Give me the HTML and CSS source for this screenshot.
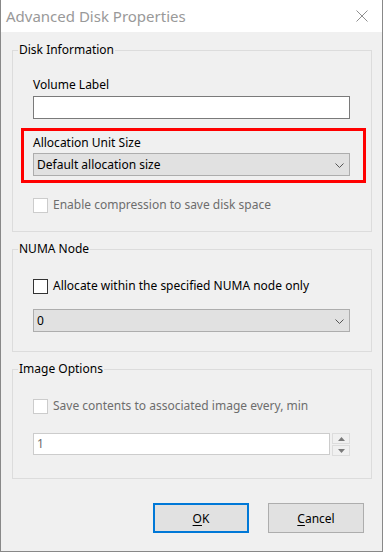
FILE: index.html
```html
<!DOCTYPE html>
<html>
<head>
<meta charset="utf-8">
<link rel="stylesheet" href="styles.css">
</head>
<body>
<div class="window">
  <div class="titlebar">
    <span class="title">Advanced Disk Properties</span>
    <svg class="close" width="12" height="12" viewBox="0 0 12 12"><path d="M0.5 0.5 L11.5 11.5 M11.5 0.5 L0.5 11.5" stroke="#8f8f8f" stroke-width="1" fill="none"/></svg>
  </div>
  <div class="client">
    <fieldset class="group g1">
      <legend>Disk Information</legend>
      <div class="group-body b1">
        <div class="field-label">Volume Label</div>
        <div class="textbox"></div>
        <div class="highlight">
          <div class="field-label">Allocation Unit Size</div>
          <div class="combo"><span>Default allocation size</span><svg class="chev" width="9" height="5" viewBox="0 0 9 5"><path d="M0.5 0.5 L4.5 4.5 L8.5 0.5" stroke="#555" stroke-width="1" fill="none"/></svg></div>
        </div>
        <div class="check disabled"><span class="box"></span><span>Enable compression to save disk space</span></div>
      </div>
    </fieldset>
    <fieldset class="group g2">
      <legend>NUMA Node</legend>
      <div class="group-body b2">
        <div class="check"><span class="box"></span><span>Allocate within the specified NUMA node only</span></div>
        <div class="combo combo2"><span>0</span><svg class="chev" width="9" height="5" viewBox="0 0 9 5"><path d="M0.5 0.5 L4.5 4.5 L8.5 0.5" stroke="#555" stroke-width="1" fill="none"/></svg></div>
      </div>
    </fieldset>
    <fieldset class="group g3">
      <legend>Image Options</legend>
      <div class="group-body b3">
        <div class="check disabled"><span class="box"></span><span>Save contents to associated image every, min</span></div>
        <div class="spinrow">
          <div class="numbox">1</div>
          <div class="spin">
            <div class="spinbtn"><svg width="7" height="4" viewBox="0 0 7 4"><path d="M0 4 L3.5 0 L7 4 Z" fill="#7a7a7a"/></svg></div>
            <div class="spinbtn"><svg width="7" height="4" viewBox="0 0 7 4"><path d="M0 0 L3.5 4 L7 0 Z" fill="#7a7a7a"/></svg></div>
          </div>
        </div>
      </div>
    </fieldset>
    <div class="buttons">
      <button class="btn default"><u>O</u>K</button>
      <button class="btn"><u>C</u>ancel</button>
    </div>
  </div>
</div>
</body>
</html>
```
FILE: styles.css
```css
html, body {
  margin: 0;
  padding: 0;
  background: #ffffff;
}
body {
  font-family: "Noto Sans", "Open Sans", sans-serif;
  font-size: 12px;
  color: #000;
}
.window {
  width: 383px;
  height: 552px;
  box-sizing: border-box;
  border: 1px solid #888888;
  border-top: none;
  background: #f0f0f0;
  display: flex;
  flex-direction: column;
}
.titlebar {
  height: 32px;
  background: #ffffff;
  display: flex;
  align-items: center;
  justify-content: space-between;
  padding-left: 5px;
  padding-right: 14px;
}
.title {
  font-size: 15px;
  color: #999999;
  line-height: 20px;
}
.close {
  display: block;
}
.client {
  display: flex;
  flex-direction: column;
}
.group {
  margin: 0 0 0 11px;
  padding: 0;
  width: 360px;
  box-sizing: border-box;
  border: 1px solid #dcdcdc;
  min-width: 0;
}
.group legend {
  margin-left: 5px;
  padding: 0 1px;
  line-height: 16px;
  font-size: 12px;
}
.g1 { margin-top: 10px; }
.g2 { margin-top: 9px; }
.g3 { margin-top: 9px; }
.group-body {
  padding: 18px 21px 18px 20px;
  display: flex;
  flex-direction: column;
}
.b2 { padding-top: 21px; padding-bottom: 19px; }
.b3 { padding-top: 21px; padding-bottom: 22px; }
.field-label {
  line-height: 16px;
  height: 16px;
  padding-top: 1px;
}
.textbox {
  margin-top: 3px;
  height: 23px;
  box-sizing: border-box;
  border: 1px solid #7a7a7a;
  background: #fff;
}
.highlight {
  margin-top: 9px;
  margin-left: -12px;
  width: 345px;
  box-sizing: border-box;
  border: 3px solid #ff0000;
  padding: 3px 13px 4px 9px;
}
.combo {
  margin-top: 2px;
  height: 23px;
  box-sizing: border-box;
  border: 1px solid #adadad;
  background: #e1e1e1;
  display: flex;
  align-items: center;
  justify-content: space-between;
  padding-left: 3px;
  padding-right: 5px;
}
.combo2 { margin-top: 15px; }
.chev { display: block; margin-top: 1px; }
.check {
  margin-top: 14px;
  height: 16px;
  line-height: 16px;
  display: flex;
  align-items: center;
  gap: 5px;
}
.b2 .check, .b3 .check { margin-top: 0; }
.check .box {
  width: 15px;
  height: 15px;
  box-sizing: border-box;
  border: 1px solid #333333;
  background: #fff;
  flex: none;
}
.check.disabled { color: #6d6d6d; }
.check.disabled .box { border-color: #cccccc; }
.spinrow {
  margin-top: 19px;
  display: flex;
  gap: 2px;
}
.numbox {
  width: 297px;
  height: 22px;
  box-sizing: border-box;
  border: 1px solid #cccccc;
  background: #fff;
  color: #6d6d6d;
  padding-left: 3px;
  line-height: 20px;
}
.spin {
  display: flex;
  flex-direction: column;
  gap: 1px;
}
.spinbtn {
  width: 18px;
  height: 11px;
  box-sizing: border-box;
  border: 1px solid #dcdcdc;
  background: #f0f0f0;
  display: flex;
  align-items: center;
  justify-content: center;
}
.spinbtn svg { display: block; }
.buttons {
  margin-top: 24px;
  display: flex;
  justify-content: flex-end;
  gap: 19px;
  padding-right: 18px;
}
.btn {
  width: 96px;
  height: 30px;
  box-sizing: border-box;
  border: 1px solid #adadad;
  background: #e1e1e1;
  font-family: "Noto Sans", "Open Sans", sans-serif;
  font-size: 12px;
  color: #000;
  padding: 0;
  margin: 0;
}
.btn.default {
  border: 2px solid #0078d7;
}
.btn u { text-underline-offset: 2px; }
```
